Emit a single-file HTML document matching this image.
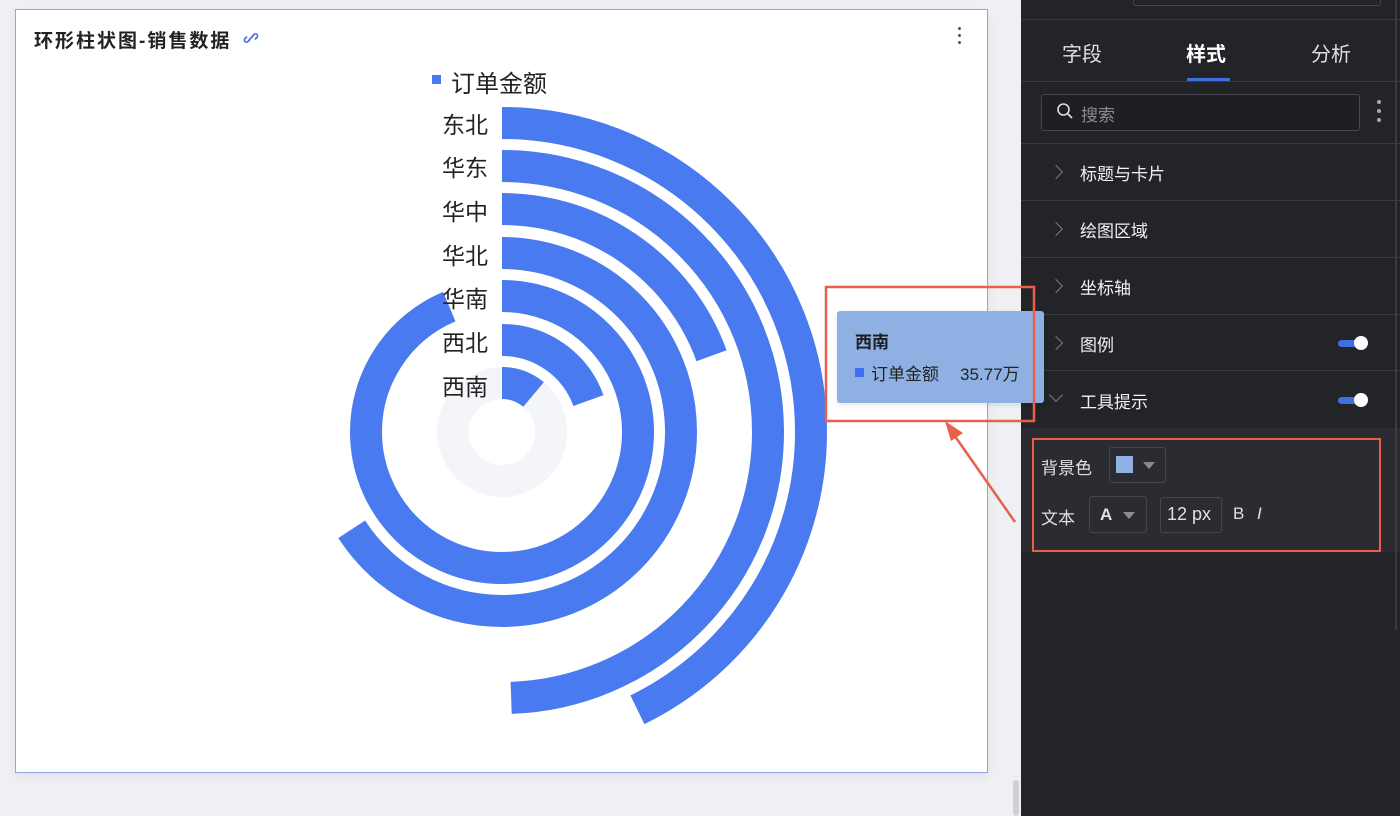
<!DOCTYPE html>
<html><head><meta charset="utf-8"><style>
*{margin:0;padding:0;box-sizing:border-box}
body{width:1400px;height:816px;overflow:hidden;background:#eef0f3;font-family:"Liberation Sans","Noto Sans CJK SC",sans-serif;position:relative}
.card{position:absolute;left:15px;top:9px;width:973px;height:764px;background:#fff;border:1px solid #8ea6e4;box-shadow:0 4px 10px rgba(0,0,0,.06)}
.abs{position:absolute}
.panel{position:absolute;left:1021px;top:0;width:379px;height:816px;background:#232428;color:#e8e8ea}
.sep{position:absolute;left:0;width:379px;height:1px;background:#3a3b40}
.item{position:absolute;left:59px;font-size:17px;color:#f2f2f3}
.chev{position:absolute;left:30px;width:10px;height:10px;border-right:1.5px solid #7a7b80;border-top:1.5px solid #7a7b80;transform:rotate(45deg)}
.tog{position:absolute;left:317px;width:28px;height:7px;border-radius:4px;background:#3f6fe0}
.tog::after{content:"";position:absolute;right:-2px;top:-4px;width:14px;height:14px;border-radius:50%;background:#fff}
.lbl{position:absolute;font-size:23px;color:#222;text-align:right;width:90px;left:398px}
</style></head><body>
<div class="card">
 <div class="abs" style="left:18px;top:16px;font-size:19px;font-weight:bold;color:#222;letter-spacing:2px">环形柱状图-销售数据</div>
 <svg class="abs" style="left:227px;top:20px" width="16" height="16" viewBox="0 0 16 16"><g fill="none" stroke="#4a6fd8" stroke-width="1.6"><path d="M7 9.5l-2 2a2 2 0 0 1-3-3l2-2"/><path d="M9 6.5l2-2a2 2 0 0 1 3 3l-2 2"/><path d="M6 10l4-4"/></g></svg>
 <div class="abs" style="left:942px;top:17px;width:4px">
  <div style="width:3px;height:3px;background:#555;border-radius:50%;margin-bottom:4px"></div><div style="width:3px;height:3px;background:#555;border-radius:50%;margin-bottom:4px"></div><div style="width:3px;height:3px;background:#555;border-radius:50%"></div>
 </div>
</div>
<svg class="abs" style="left:0;top:0" width="1020" height="816">
 <g transform="translate(502,432) rotate(-90)" fill="none" stroke-width="32">
  <circle r="49" stroke="#f3f5f9"/>
  <circle r="309" stroke="#4a7af0" stroke-dasharray="830.5 3000"/>
  <circle r="266" stroke="#4a7af0" stroke-dasharray="826.4 3000"/>
  <circle r="223" stroke="#4a7af0" stroke-dasharray="272.4 3000"/>
  <circle r="179" stroke="#4a7af0" stroke-dasharray="740.4 3000"/>
  <circle r="136" stroke="#4a7af0" stroke-dasharray="800 3000"/>
  <circle r="92" stroke="#4a7af0" stroke-dasharray="112.4 3000"/>
  <circle r="49" stroke="#4a7af0" stroke-dasharray="34.2 3000"/>
 </g>
</svg>
<div class="abs" style="left:432px;top:75px;width:9px;height:9px;background:#4a7af0"></div>
<div class="abs" style="left:451px;top:64px;font-size:24px;color:#222">订单金额</div>
<div class="lbl" style="top:106px">东北</div>
<div class="lbl" style="top:149px">华东</div>
<div class="lbl" style="top:193px">华中</div>
<div class="lbl" style="top:237px">华北</div>
<div class="lbl" style="top:280px">华南</div>
<div class="lbl" style="top:324px">西北</div>
<div class="lbl" style="top:368px">西南</div>
<div class="abs" style="left:1013px;top:780px;width:6px;height:36px;background:#cfd1d6;border-radius:3px"></div>
<div class="panel">
 <div class="abs" style="left:112px;top:-2px;width:248px;height:8px;border:1px solid #45464b;border-top:none;border-radius:0 0 3px 3px"></div>
 <div class="sep" style="top:19px"></div>
 <div class="abs" style="left:41px;top:38px;font-size:20px;color:#e0e0e2">字段</div>
 <div class="abs" style="left:165px;top:38px;font-size:20px;color:#fff;font-weight:bold">样式</div>
 <div class="abs" style="left:290px;top:38px;font-size:20px;color:#e0e0e2">分析</div>
 <div class="abs" style="left:166px;top:78px;width:43px;height:3px;background:#3f6fe0"></div>
 <div class="sep" style="top:81px"></div>
 <div class="abs" style="left:20px;top:94px;width:319px;height:37px;border:1px solid #46474c;border-radius:3px;background:#1e1f23"></div>
 <svg class="abs" style="left:35px;top:102px" width="18" height="18" viewBox="0 0 18 18"><circle cx="7.5" cy="7.5" r="5.5" fill="none" stroke="#ddd" stroke-width="1.6"/><path d="M11.5 11.5l4.5 4.5" stroke="#ddd" stroke-width="1.8"/></svg>
 <div class="abs" style="left:60px;top:101px;font-size:17px;color:#8a8b90">搜索</div>
 <div class="abs" style="left:356px;top:100px">
  <div style="width:4px;height:4px;background:#aaa;border-radius:50%;margin-bottom:5px"></div><div style="width:4px;height:4px;background:#aaa;border-radius:50%;margin-bottom:5px"></div><div style="width:4px;height:4px;background:#aaa;border-radius:50%"></div>
 </div>
 <div class="sep" style="top:143px"></div>
 <div class="chev" style="top:167px"></div><div class="item" style="top:160px">标题与卡片</div>
 <div class="sep" style="top:200px"></div>
 <div class="chev" style="top:224px"></div><div class="item" style="top:217px">绘图区域</div>
 <div class="sep" style="top:257px"></div>
 <div class="chev" style="top:281px"></div><div class="item" style="top:274px">坐标轴</div>
 <div class="sep" style="top:314px"></div>
 <div class="chev" style="top:338px"></div><div class="item" style="top:331px">图例</div><div class="tog" style="top:340px"></div>
 <div class="sep" style="top:370px"></div>
 <div class="chev" style="top:390px;transform:rotate(135deg)"></div><div class="item" style="top:388px">工具提示</div><div class="tog" style="top:397px"></div>
 <div class="abs" style="left:0;top:428px;width:379px;height:124px;background:#2b2c31"></div>
 <div class="abs" style="left:11px;top:438px;width:349px;height:114px;border:2.5px solid #e8604c"></div>
 <div class="abs" style="left:20px;top:454px;font-size:17px;color:#e0e0e2">背景色</div>
 <div class="abs" style="left:88px;top:447px;width:57px;height:36px;border:1px solid #46474c;border-radius:3px"></div>
 <div class="abs" style="left:95px;top:456px;width:17px;height:17px;background:#8fb0e3"></div>
 <div class="abs" style="left:122px;top:462px;border:6px solid transparent;border-top:7px solid #8a8b90"></div>
 <div class="abs" style="left:20px;top:504px;font-size:17px;color:#e0e0e2">文本</div>
 <div class="abs" style="left:68px;top:496px;width:58px;height:37px;border:1px solid #46474c;border-radius:3px"></div>
 <div class="abs" style="left:79px;top:505px;font-size:17px;color:#e0e0e2;font-weight:bold">A</div>
 <div class="abs" style="left:102px;top:512px;border:6px solid transparent;border-top:7px solid #8a8b90"></div>
 <div class="abs" style="left:139px;top:497px;width:62px;height:36px;border:1px solid #46474c;border-radius:3px"></div>
 <div class="abs" style="left:146px;top:504px;font-size:18px;color:#e0e0e2">12 px</div>
 <div class="abs" style="left:212px;top:504px;font-size:17px;color:#e0e0e2">B</div>
 <div class="abs" style="left:236px;top:504px;font-size:17px;color:#e0e0e2;font-style:italic">I</div>
 <div class="abs" style="left:374px;top:0;width:2px;height:630px;background:#3a3b40"></div>
</div>
<div class="abs" style="left:837px;top:311px;width:207px;height:92px;background:#8fb0e3;border-radius:3px;box-shadow:0 2px 6px rgba(0,0,0,.1);z-index:5">
 <div class="abs" style="left:18px;top:17px;font-size:17px;color:#1e1e1e;font-weight:bold">西南</div>
 <div class="abs" style="left:18px;top:57px;width:9px;height:9px;background:#3d6ff0"></div>
 <div class="abs" style="left:34px;top:49px;font-size:17px;color:#222">订单金额</div>
 <div class="abs" style="left:123px;top:49px;font-size:17px;color:#222">35.77万</div>
</div>
<svg class="abs" style="left:0;top:0;z-index:6" width="1400" height="816">
 <line x1="1015" y1="522" x2="952" y2="432" stroke="#e8604c" stroke-width="2.5"/>
 <polygon points="945,421 963,433 951,441" fill="#e8604c"/>
 <rect x="826" y="287" width="208" height="134" fill="none" stroke="#e8604c" stroke-width="2.5"/>
</svg>
</body></html>
